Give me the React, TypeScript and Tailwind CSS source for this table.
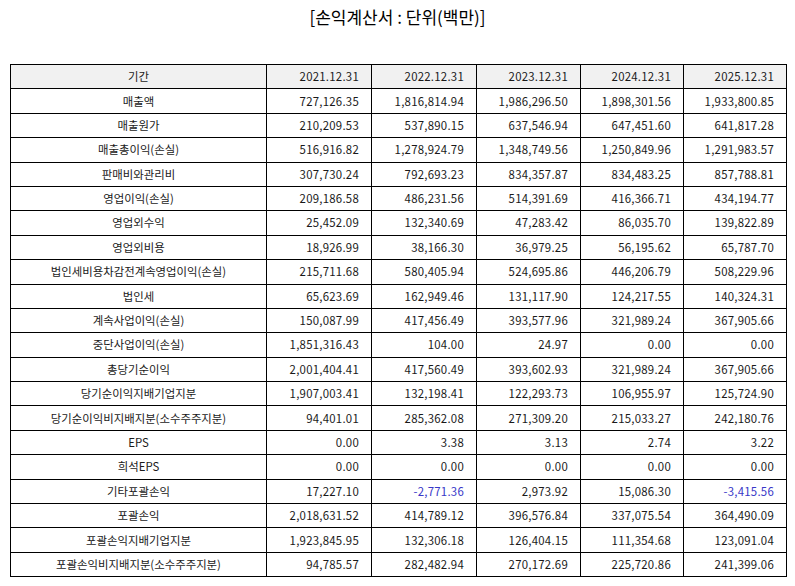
const years = ["2021.12.31", "2022.12.31", "2023.12.31", "2024.12.31", "2025.12.31"];

const rows: [string, string[]][] = [
  ["매출액", ["727,126.35", "1,816,814.94", "1,986,296.50", "1,898,301.56", "1,933,800.85"]],
  ["매출원가", ["210,209.53", "537,890.15", "637,546.94", "647,451.60", "641,817.28"]],
  ["매출총이익(손실)", ["516,916.82", "1,278,924.79", "1,348,749.56", "1,250,849.96", "1,291,983.57"]],
  ["판매비와관리비", ["307,730.24", "792,693.23", "834,357.87", "834,483.25", "857,788.81"]],
  ["영업이익(손실)", ["209,186.58", "486,231.56", "514,391.69", "416,366.71", "434,194.77"]],
  ["영업외수익", ["25,452.09", "132,340.69", "47,283.42", "86,035.70", "139,822.89"]],
  ["영업외비용", ["18,926.99", "38,166.30", "36,979.25", "56,195.62", "65,787.70"]],
  ["법인세비용차감전계속영업이익(손실)", ["215,711.68", "580,405.94", "524,695.86", "446,206.79", "508,229.96"]],
  ["법인세", ["65,623.69", "162,949.46", "131,117.90", "124,217.55", "140,324.31"]],
  ["계속사업이익(손실)", ["150,087.99", "417,456.49", "393,577.96", "321,989.24", "367,905.66"]],
  ["중단사업이익(손실)", ["1,851,316.43", "104.00", "24.97", "0.00", "0.00"]],
  ["총당기순이익", ["2,001,404.41", "417,560.49", "393,602.93", "321,989.24", "367,905.66"]],
  ["당기순이익지배기업지분", ["1,907,003.41", "132,198.41", "122,293.73", "106,955.97", "125,724.90"]],
  ["당기순이익비지배지분(소수주주지분)", ["94,401.01", "285,362.08", "271,309.20", "215,033.27", "242,180.76"]],
  ["EPS", ["0.00", "3.38", "3.13", "2.74", "3.22"]],
  ["희석EPS", ["0.00", "0.00", "0.00", "0.00", "0.00"]],
  ["기타포괄손익", ["17,227.10", "-2,771.36", "2,973.92", "15,086.30", "-3,415.56"]],
  ["포괄손익", ["2,018,631.52", "414,789.12", "396,576.84", "337,075.54", "364,490.09"]],
  ["포괄손익지배기업지분", ["1,923,845.95", "132,306.18", "126,404.15", "111,354.68", "123,091.04"]],
  ["포괄손익비지배지분(소수주주지분)", ["94,785.57", "282,482.94", "270,172.69", "225,720.86", "241,399.06"]],
];

export default function App() {
  return (
    <div
      className="w-[795px] h-[586px] bg-white text-[#1a1a1a]"
      style={{ fontFamily: '"Noto Sans CJK KR", "Noto Sans", sans-serif' }}
    >
      <h1 className="pt-[5px] h-[64px] text-center text-[17px] leading-[24px] text-black">
        [손익계산서 : 단위(백만)]
      </h1>
      <div className="px-[10px]">
        <table className="w-[776px] border-collapse table-fixed text-[11.4px]">
          <colgroup>
            <col className="w-[256px]" />
            <col className="w-[105px]" />
            <col className="w-[105px]" />
            <col className="w-[104px]" />
            <col className="w-[103px]" />
            <col className="w-[103px]" />
          </colgroup>
          <thead>
            <tr className="h-[24.4px] bg-[#f1f1f1]">
              <th className="border border-black font-normal text-center p-0">기간</th>
              {years.map((y) => (
                <th
                  key={y}
                  className="border border-black font-normal text-right pr-[12px] py-0 tracking-[0.25px]"
                >
                  {y}
                </th>
              ))}
            </tr>
          </thead>
          <tbody>
            {rows.map(([label, vals]) => (
              <tr key={label} className="h-[24.4px]">
                <td className="border border-black text-center p-0 whitespace-nowrap">{label}</td>
                {vals.map((v, i) => (
                  <td
                    key={i}
                    className={
                      "border border-black text-right pr-[12px] py-0 tracking-[0.25px] " +
                      (v.startsWith("-") ? "text-[#3838c8]" : "")
                    }
                  >
                    {v}
                  </td>
                ))}
              </tr>
            ))}
          </tbody>
        </table>
      </div>
    </div>
  );
}
